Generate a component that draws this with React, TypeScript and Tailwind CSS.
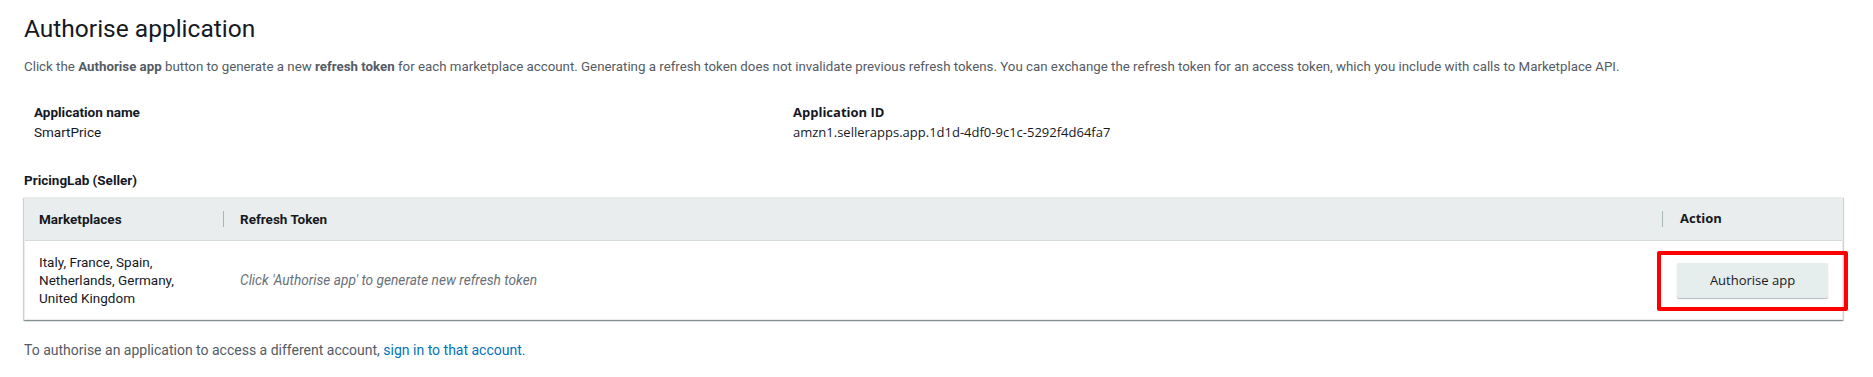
import React from "react"

const ember = { fontFamily: "Roboto, 'Liberation Sans', sans-serif" }
const openSans = { fontFamily: "'Open Sans', 'Liberation Sans', sans-serif" }

export default function App() {
  return (
    <div className="min-h-[377px] bg-white pl-[24px] pr-[30px] text-[#16191f]" style={ember}>
      <h1 className="pt-[14px] text-[24.5px] leading-[30px] font-normal">Authorise application</h1>
      <p className="mt-[13px] text-[13.3px] leading-[20px] text-[#545b64]">
        Click the <b className="font-bold">Authorise app</b> button to generate a new <b className="font-bold">refresh token</b> for
        each marketplace account. Generating a refresh token does not invalidate previous refresh tokens. You can exchange the
        refresh token for an access token, which you include with calls to Marketplace API.
      </p>

      <div className="mt-[25px] flex pl-[10px]">
        <div className="w-[759px]">
          <div className="text-[13.5px] leading-[20px] font-bold">Application name</div>
          <div className="text-[13.5px] leading-[20px]">SmartPrice</div>
        </div>
        <div style={openSans}>
          <div className="text-[13px] leading-[20px] font-bold">Application ID</div>
          <div className="text-[13px] leading-[20px]">amzn1.sellerapps.app.1d1d-4df0-9c1c-5292f4d64fa7</div>
        </div>
      </div>

      <div className="mt-[28px] text-[13.5px] leading-[20px] font-bold">PricingLab (Seller)</div>

      <div className="mt-[7px] border border-[#eaeded] shadow-[0_1px_1px_0_rgba(0,28,36,0.3),1px_1px_1px_0_rgba(0,28,36,0.15),-1px_1px_1px_0_rgba(0,28,36,0.15)]">
        <div className="flex h-[43px] items-center border-b border-[#d5dbdb] bg-[#eaeded] text-[13.5px] font-bold">
          <div className="w-[198px] pl-[14px]">Marketplaces</div>
          <div className="flex h-[16px] flex-1 items-center border-l border-[#aab7b8] pl-[16px]">Refresh Token</div>
          <div className="flex h-[16px] w-[180px] items-center border-l border-[#aab7b8] pl-[17px] text-[13px]" style={openSans}>
            Action
          </div>
        </div>
        <div className="flex h-[78px] items-center text-[13.5px] leading-[18px]">
          <div className="w-[198px] pl-[14px] pr-[40px]">
            Italy, France, Spain,
            <br />
            Netherlands, Germany,
            <br />
            United Kingdom
          </div>
          <div className="flex-1 pl-[17px] text-[13.7px] italic text-[#687078]">Click 'Authorise app' to generate new refresh token</div>
          <div className="flex w-[180px] pl-[15px]">
            <div className="relative">
              <button
                className="h-[35px] w-[151px] rounded-[2px] bg-[#e6eded] text-[13px] text-[#16191f] shadow-[0_1px_1px_0_rgba(0,28,36,0.3)]"
                style={openSans}
              >
                Authorise app
              </button>
              <div className="pointer-events-none absolute -left-[20px] -right-[20px] -top-[12px] -bottom-[13px] rounded-[2px] border-[4px] border-[#ff0000]" />
            </div>
          </div>
        </div>
      </div>

      <p className="mt-[20px] text-[14px] leading-[20px] text-[#545b64]">
        To authorise an application to access a different account, <a className="text-[#0073bb]">sign in to that account.</a>
      </p>
    </div>
  )
}
